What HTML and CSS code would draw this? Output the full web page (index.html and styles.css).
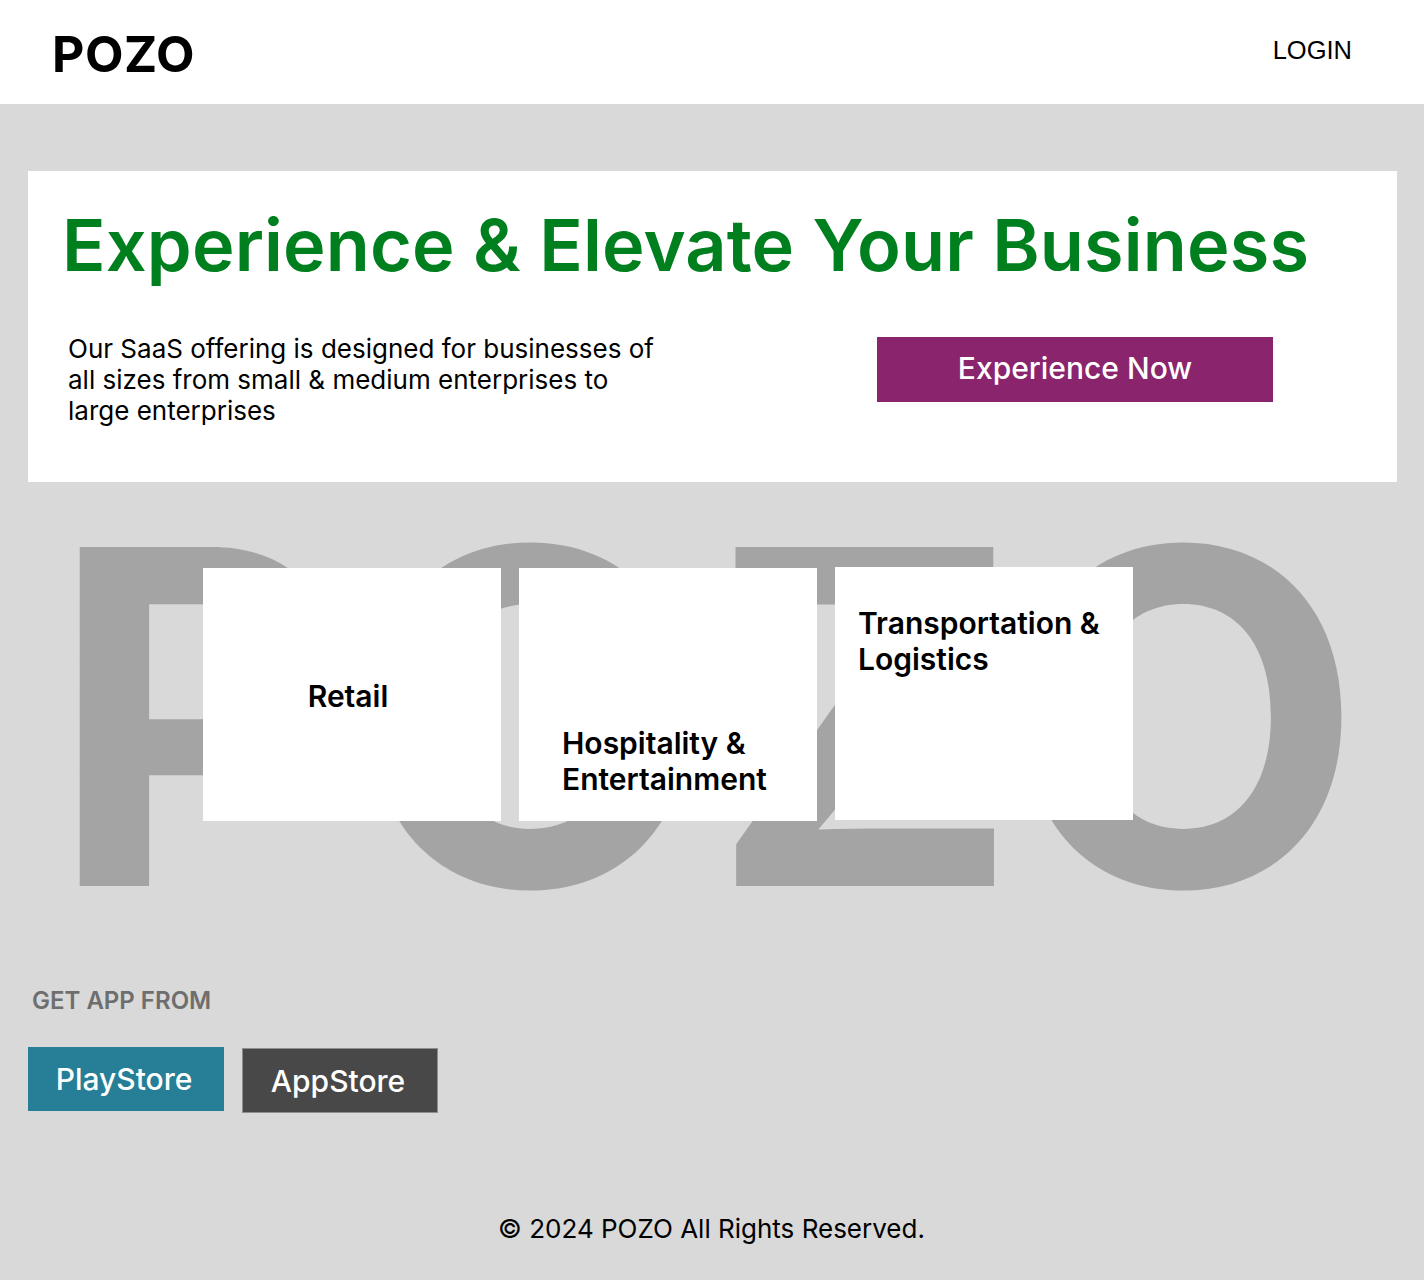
FILE: index.html
```html
<!DOCTYPE html>
<html lang="en">
<head>
<meta charset="utf-8">
<title>POZO</title>
<link rel="stylesheet" href="styles.css">
</head>
<body>
<header class="topbar">
  <div class="logo">POZO</div>
  <a class="login" href="#">LOGIN</a>
</header>
<main class="main">
  <section class="hero">
    <h1 class="hero-title">Experience &amp; Elevate Your Business</h1>
    <div class="hero-row">
      <p class="hero-text">Our SaaS offering is designed for businesses of all sizes from small &amp; medium enterprises to large enterprises</p>
      <a class="btn-primary" href="#">Experience Now</a>
    </div>
  </section>
  <section class="industries">
    <div class="bigword" aria-hidden="true">POZO</div>
    <div class="cards">
      <div class="card card-center">Retail</div>
      <div class="card card-bottom">Hospitality &amp;<br>Entertainment</div>
      <div class="card card-top">Transportation &amp;<br>Logistics</div>
    </div>
  </section>
  <section class="getapp">
    <div class="getapp-label">GET APP FROM</div>
    <div class="store-row">
      <a class="store store-play" href="#">PlayStore</a>
      <a class="store store-apple" href="#">AppStore</a>
    </div>
  </section>
  <footer class="footer">© 2024 POZO All Rights Reserved.</footer>
</main>
</body>
</html>
```

FILE: styles.css
```css
* { box-sizing: border-box; }
html, body { margin: 0; padding: 0; }
body {
  font-family: Inter, "Noto Sans", sans-serif;
  background: #d9d9d9;
  color: #000;
}
a { text-decoration: none; color: inherit; }

.topbar {
  height: 104px;
  background: #fff;
  display: flex;
  align-items: center;
  justify-content: space-between;
  padding: 0 72px 0 52px;
}
.logo {
  font-size: 50px;
  font-weight: 700;
  letter-spacing: 0.5px;
  margin-top: 4px;
}
.login {
  font-family: "Liberation Sans", Arial, sans-serif;
  font-size: 25.5px;
  color: #000;
  margin-top: -4px;
}

.main { padding: 0 27px 0 28px; }

.hero {
  background: #fff;
  margin-top: 67px;
  height: 311px;
  padding: 30px 0 0 34px;
}
.hero-title {
  margin: 0;
  font-size: 72px;
  font-weight: 600;
  line-height: 87px;
  letter-spacing: 0.15px;
  color: #007f1f;
  white-space: nowrap;
}
.hero-row {
  display: flex;
  justify-content: space-between;
  align-items: flex-start;
  margin-top: 45px;
  padding-right: 124px;
}
.hero-text {
  margin: 0 0 0 6px;
  width: 600px;
  font-size: 26px;
  line-height: 31px;
}
.btn-primary {
  margin-top: 4px;
  width: 396px;
  height: 65px;
  background: #8a246c;
  color: #fff;
  font-size: 30px;
  font-weight: 500;
  display: flex;
  align-items: center;
  justify-content: center;
  padding-bottom: 3px;
}

.industries {
  display: grid;
  margin-top: 5px;
}
.bigword, .cards { grid-area: 1 / 1; }
.bigword {
  font-size: 466px;
  font-weight: 700;
  line-height: 460px;
  color: #a4a4a4;
  padding-left: 21px;
  white-space: nowrap;
  overflow: hidden;
}
.cards {
  display: flex;
  gap: 18px;
  padding: 81px 0 0 175px;
  align-items: flex-start;
}
.card {
  width: 298px;
  height: 253px;
  background: #fff;
  font-size: 30px;
  font-weight: 600;
  line-height: 36px;
  display: flex;
}
.card-center { align-items: center; justify-content: center; padding: 2px 8px 0 0; }
.card-bottom { align-items: flex-end; padding: 0 0 24px 43px; }
.card-top { align-items: flex-start; padding: 38px 0 0 23px; margin-top: -1px; }

.getapp { margin-top: 39px; }
.getapp-label {
  font-size: 24px;
  font-weight: 600;
  color: #6e6e6e;
  padding-left: 4px;
}
.store-row {
  display: flex;
  gap: 18px;
  margin-top: 32px;
  align-items: flex-start;
}
.store {
  width: 196px;
  height: 64px;
  display: flex;
  align-items: center;
  justify-content: center;
  font-size: 30px;
  font-weight: 500;
  color: #fff;
  padding-right: 4px;
}
.store-play { background: #267f96; }
.store-apple { background: #484848; border: 1px solid #8e8e8e; margin-top: 1px; height: 65px; }

.footer {
  text-align: center;
  font-size: 26px;
  margin-top: 100px;
  padding-bottom: 37px;
  padding-right: 2px;
}
```
